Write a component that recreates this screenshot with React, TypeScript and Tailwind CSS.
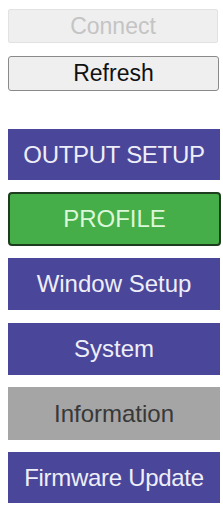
export default function App() {
  const font = { fontFamily: '"Liberation Sans", Arial, sans-serif' };
  return (
    <div className="w-[223px] h-[510px] bg-white" style={font}>
      <div className="flex flex-col pl-2 pt-[9px] w-[220px]">
        <div className="h-[34px] w-[210px] flex items-center justify-center bg-[#efefef] border border-[#e2e2e2] rounded-[2px] text-[23px] text-[#c4c4c4]">
          Connect
        </div>
        <div className="mt-[13px] h-[35px] w-[211px] flex items-center justify-center bg-[#efefef] border border-[#8a8a8a] rounded-[3px] text-[23px] text-[#111]">
          Refresh
        </div>
        <div className="mt-[38px] h-[51px] w-[212px] flex items-center justify-center bg-[#4a469a] text-[24px] tracking-[-0.3px] text-[#eeeef8]">
          OUTPUT SETUP
        </div>
        <div className="mt-[12px] h-[54px] w-[213px] flex items-center justify-center bg-[#45ae48] border-2 border-[#1e3d1e] rounded-[4px] text-[24px] text-[#dcf7d8]">
          PROFILE
        </div>
        <div className="mt-[12px] h-[52px] w-[212px] flex items-center justify-center bg-[#4a469a] text-[24px] text-[#eeeef8]">
          Window Setup
        </div>
        <div className="mt-[13px] h-[52px] w-[212px] flex items-center justify-center bg-[#4a469a] text-[24px] text-[#eeeef8]">
          System
        </div>
        <div className="mt-[12px] h-[53px] w-[212px] flex items-center justify-center bg-[#a5a5a5] text-[24px] text-[#383838]">
          Information
        </div>
        <div className="mt-[12px] h-[51px] w-[212px] flex items-center justify-center bg-[#4a469a] text-[24px] tracking-[-0.3px] text-[#eeeef8]">
          Firmware Update
        </div>
      </div>
    </div>
  );
}
